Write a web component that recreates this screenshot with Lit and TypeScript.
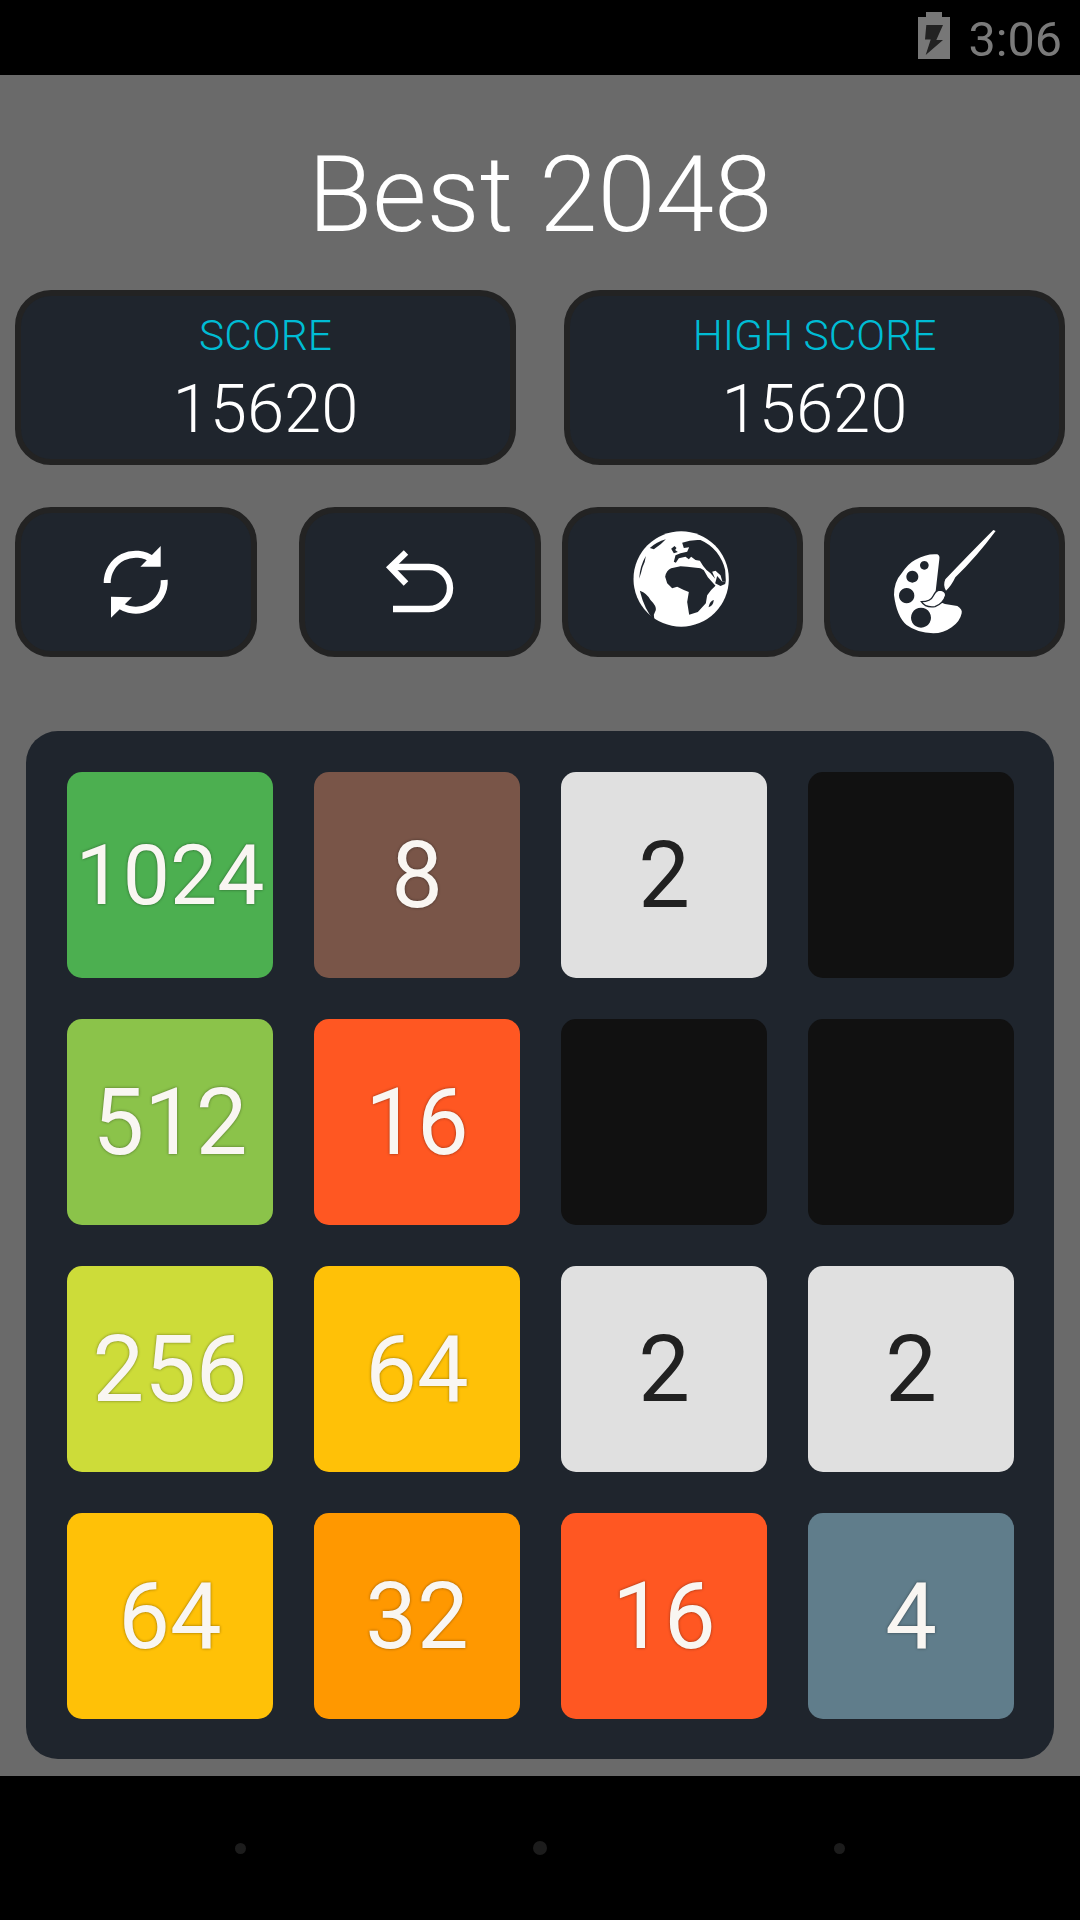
import { LitElement, html, css, svg } from "lit";
import { customElement } from "lit/decorators.js";

const TILES: { v: number; c: string }[] = [
  { v: 1024, c: "t1024" }, { v: 8, c: "t8" }, { v: 2, c: "t2" }, { v: 0, c: "t0" },
  { v: 512, c: "t512" }, { v: 16, c: "t16" }, { v: 0, c: "t0" }, { v: 0, c: "t0" },
  { v: 256, c: "t256" }, { v: 64, c: "t64" }, { v: 2, c: "t2" }, { v: 2, c: "t2" },
  { v: 64, c: "t64" }, { v: 32, c: "t32" }, { v: 16, c: "t16" }, { v: 4, c: "t4" },
];

const refreshIcon = svg`<svg class="ico" viewBox="0 0 80 80" width="80" height="80">
  <path d="M11.2 41 A28.5 28.5 0 0 1 57 18" fill="none" stroke="#fff" stroke-width="7"/>
  <path d="M68.2 38 A28.5 28.5 0 0 1 22 62" fill="none" stroke="#fff" stroke-width="7"/>
  <path d="M64.7 4 V24.7 H44.4 Z" fill="#fff"/>
  <path d="M15 54.7 V75.7 L36 55.3 Z" fill="#fff"/>
</svg>`;

const undoIcon = svg`<svg class="ico" viewBox="0 0 80 80" width="80" height="80">
  <path d="M13 67 H49 A21 21 0 0 0 49 25 H10" fill="none" stroke="#fff" stroke-width="6.4"/>
  <path d="M26 10.5 L10.5 25.4 L26 41.5" fill="none" stroke="#fff" stroke-width="6.4"/>
</svg>`;

const globeIcon = svg`<svg class="ico" viewBox="7.5 6 360 360" width="120" height="120">
  <circle cx="182" cy="177" r="143" fill="#fff"/>
  <g fill="#1f252d">
    <path d="M88 84 Q108 66 136 58 Q122 74 100 88 Z"/>
    <path d="M56 176 Q58 138 76 108 Q74 128 66 142 Q62 160 56 176 Z"/>
    <path d="M58 212 Q80 220 90 240 Q108 258 106 270 L100 284 L102 302 Q72 270 58 212 Z"/>
    <path d="M152 86 L162 78 L168 84 L164 90 L172 96 L160 100 Z"/>
    <path d="M185 68 Q212 58 240 60 Q268 72 288 96 Q308 122 314 150 L316 182 L306 186 L300 166 L285 152 L275 155 L284 176 L270 160 L258 150 L248 138 L238 122 L225 120 L212 110 L205 118 L195 110 L175 115 L166 128 L160 125 L165 106 L180 100 L200 95 L206 82 L190 84 Z"/>
    <path d="M134 170 Q138 150 152 145 L180 139 L200 140 L240 145 L250 151 L262 172 L285 197 L272 210 L260 226 L256 250 L232 276 L206 284 L200 246 L205 216 L190 210 L170 200 L155 205 L140 190 Z"/>
    <path d="M290 168 L306 186 L316 182 L314 192 L300 198 L284 190 Z"/>
    <path d="M264 262 Q268 242 280 240 Q278 258 264 262 Z"/>
  </g>
</svg>`;

const paletteIcon = svg`<svg class="ico" viewBox="0 6 390 360" width="130" height="120">
  <path fill="#fff" fill-rule="evenodd" d="M172 103 Q180 106 178 118 L168 205 L164 240 L195 252 L232 258 Q248 268 245 280 Q240 305 215 322 Q190 340 160 340 Q110 338 80 315 Q50 290 42 225 Q42 185 65 160 Q85 130 105 120 Q140 100 172 103 Z
    M133 123 a13 13 0 1 0 .01 0 Z M97 152 a18 18 0 1 0 .01 0 Z M80 204 a23 23 0 1 0 .01 0 Z M123 263 a30 30 0 1 0 .01 0 Z"/>
  <path fill="#fff" d="M340 30 L347 33 Q290 110 226 172 Q214 198 198 212 Q188 196 196 178 Q262 108 340 30 Z"/>
  <path fill="#fff" stroke="#1f252d" stroke-width="4" d="M124 245 Q152 245 160 227 Q168 210 182 210 Q198 214 197 226 Q190 250 165 260 Q136 264 124 245 Z"/>
</svg>`;

@customElement("app-root")
export class AppRoot extends LitElement {
  static styles = css`
    :host {
      display: flex;
      flex-direction: column;
      width: 1080px;
      height: 1920px;
      background: #6a6a6a;
      font-family: Roboto, "Liberation Sans", sans-serif;
      overflow: hidden;
    }
    .status {
      height: 75px;
      background: #000;
      display: flex;
      justify-content: flex-end;
      align-items: center;
      color: #7a7a7a;
      font-size: 48.5px;
      padding-right: 18px;
      gap: 18px;
    }
    .batt {
      margin-bottom: 4px;
    }
    .time {
      padding-top: 4px;
    }
    .main {
      flex: 1;
      display: flex;
      flex-direction: column;
      min-height: 0;
    }
    .title {
      box-sizing: border-box;
      height: 215px;
      padding-top: 26px;
      display: flex;
      align-items: center;
      justify-content: center;
      color: #fff;
      font-weight: 300;
      font-size: 105px;
      line-height: 1;
    }
    .scores {
      display: flex;
      justify-content: space-between;
      padding: 0 15px;
    }
    .card {
      box-sizing: border-box;
      width: 501px;
      height: 175px;
      background: #1f252d;
      border: 6px solid #232323;
      border-radius: 36px;
      text-align: center;
      font-weight: 300;
    }
    .label {
      color: #00bcd4;
      font-size: 42.5px;
      line-height: 50px;
      margin-top: 15px;
    }
    .value {
      color: #fff;
      font-size: 67px;
      line-height: 72px;
      margin-top: 12px;
    }
    .buttons {
      display: flex;
      padding: 0 15px;
      margin-top: 42px;
      gap: 21px;
    }
    .btn {
      box-sizing: border-box;
      flex: none;
      width: 241px;
      height: 150px;
      background: #1f252d;
      border: 6px solid #232323;
      border-radius: 36px;
      display: flex;
      align-items: center;
      justify-content: center;
    }
    .btn.wide {
      width: 242px;
    }
    .btn.first {
      margin-right: 21px;
    }
    .ico {
      display: block;
      flex: none;
    }
    .board {
      box-sizing: border-box;
      width: 1028px;
      height: 1028px;
      margin: 74px 0 0 26px;
      padding: 41px 40px 40px 41px;
      background: #1f252d;
      border-radius: 32px;
      display: grid;
      grid-template-columns: repeat(4, 206px);
      grid-auto-rows: 206px;
      gap: 41px;
    }
    .tile {
      border-radius: 15px;
      display: flex;
      align-items: center;
      justify-content: center;
      color: #f9f6f2;
      font-size: 92px;
      text-shadow: 0 0 3px rgba(0, 0, 0, 0.45);
      white-space: nowrap;
    }
    .t0 { background: #111; }
    .t2 { background: #e0e0e0; color: #212121; text-shadow: none; }
    .t4 { background: #607d8b; }
    .t8 { background: #795548; }
    .t16 { background: #ff5722; }
    .t32 { background: #ff9800; }
    .t64 { background: #ffc107; }
    .t256 { background: #cddc39; }
    .t512 { background: #8bc34a; }
    .t1024 { background: #4caf50; font-size: 84px; }
    .nav {
      height: 144px;
      background: #000;
      display: flex;
      align-items: center;
      justify-content: center;
      gap: 287px;
    }
    .dot {
      width: 11px;
      height: 11px;
      border-radius: 50%;
      background: #1c1c1c;
    }
    .dot.mid {
      width: 14px;
      height: 14px;
    }
  `;

  render() {
    return html`
      <div class="status">
        <svg class="ico batt" viewBox="0 0 32 47" width="32" height="47">
          <path fill="#777" d="M8 0 H24 V5 H32 V47 H0 V5 H8 Z"/>
          <path fill="#222" d="M8.3 13 H25 L18.3 28 H25 L7.7 43 L12.7 27.5 H7 Z"/>
        </svg>
        <span class="time">3:06</span>
      </div>
      <div class="main">
        <div class="title">Best 2048</div>
        <div class="scores">
          <div class="card"><div class="label">SCORE</div><div class="value">15620</div></div>
          <div class="card"><div class="label">HIGH SCORE</div><div class="value">15620</div></div>
        </div>
        <div class="buttons">
          <div class="btn wide first">${refreshIcon}</div>
          <div class="btn wide">${undoIcon}</div>
          <div class="btn">${globeIcon}</div>
          <div class="btn">${paletteIcon}</div>
        </div>
        <div class="board">
          ${TILES.map((t) => html`<div class="tile ${t.c}">${t.v || ""}</div>`)}
        </div>
      </div>
      <div class="nav">
        <div class="dot"></div>
        <div class="dot mid"></div>
        <div class="dot"></div>
      </div>
    `;
  }
}
